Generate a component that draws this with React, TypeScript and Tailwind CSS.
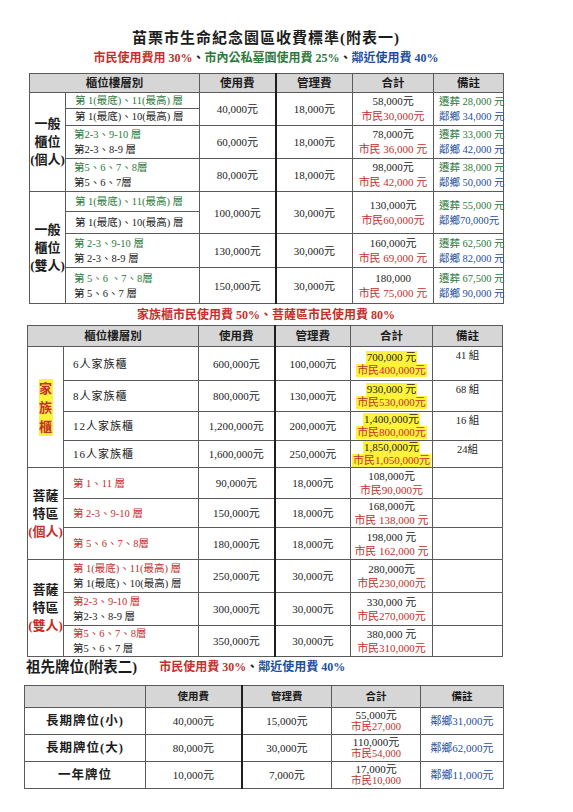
import React from "react"

const G = "text-[#2d7a3c]"
const R = "text-[#c4302b]"
const B = "text-[#1f4f9c]"
const K = "text-[#1c1c1c]"

type Line = { t: string; c: string }

const td = "border border-[#5a5a5a] p-0 align-middle"
const thick = "border-r-2 border-r-[#1e1e1e]"

function Lines({ lines, lh = "h-[15px] leading-[15px]", className = "" }: { lines: Line[]; lh?: string; className?: string }) {
  return (
    <div className={`flex flex-col ${className}`}>
      {lines.map((l, i) => (
        <span key={i} className={`block overflow-visible ${lh} ${l.c}`}>
          {l.t}
        </span>
      ))}
    </div>
  )
}

const general = [
  {
    group: ["一般", "櫃位", "(個人)"],
    rows: [
      {
        split: true,
        floors: [
          { t: "第 1(最底)、11(最高) 層", c: G },
          { t: "第 1(最底)、10(最高) 層", c: K },
        ],
        use: "40,000元",
        mgmt: "18,000元",
        total: "58,000元",
        citizen: "市民30,000元",
        notes: ["遷葬 28,000 元", "鄰鄉 34,000 元"],
        h: [16, 17],
      },
      {
        floors: [
          { t: "第2-3、9-10 層", c: G },
          { t: "第2-3、8-9 層", c: K },
        ],
        use: "60,000元",
        mgmt: "18,000元",
        total: "78,000元",
        citizen: "市民 36,000 元",
        notes: ["遷葬 33,000 元", "鄰鄉 42,000 元"],
        h: [33],
      },
      {
        floors: [
          { t: "第5、6、7、8層", c: G },
          { t: "第5、6、7層", c: K },
        ],
        use: "80,000元",
        mgmt: "18,000元",
        total: "98,000元",
        citizen: "市民 42,000 元",
        notes: ["遷葬 38,000 元", "鄰鄉 50,000 元"],
        h: [33],
      },
    ],
  },
  {
    group: ["一般", "櫃位", "(雙人)"],
    rows: [
      {
        split: true,
        floors: [
          { t: "第 1(最底)、11(最高) 層", c: G },
          { t: "第 1(最底)、10(最高) 層", c: K },
        ],
        use: "100,000元",
        mgmt: "30,000元",
        total: "130,000元",
        citizen: "市民60,000元",
        notes: ["遷葬 55,000 元", "鄰鄉70,000元"],
        h: [20, 22],
      },
      {
        floors: [
          { t: "第 2-3、9-10 層", c: G },
          { t: "第 2-3、8-9 層", c: K },
        ],
        use: "130,000元",
        mgmt: "30,000元",
        total: "160,000元",
        citizen: "市民 69,000 元",
        notes: ["遷葬 62,500 元", "鄰鄉 82,000 元"],
        h: [34],
      },
      {
        floors: [
          { t: "第 5、6 、7、8層", c: G },
          { t: "第 5、6、7 層", c: K },
        ],
        use: "150,000元",
        mgmt: "30,000元",
        total: "180,000",
        citizen: "市民 75,000 元",
        notes: ["遷葬 67,500 元", "鄰鄉 90,000 元"],
        h: [36],
      },
    ],
  },
]

const family = [
  { name: "6人家族櫃", use: "600,000元", mgmt: "100,000元", total: "700,000 元", citizen: "市民400,000元", note: "41 組", h: 34 },
  { name: "8人家族櫃", use: "800,000元", mgmt: "130,000元", total: "930,000 元", citizen: "市民530,000元", note: "68 組", h: 31 },
  { name: "12人家族櫃", use: "1,200,000元", mgmt: "200,000元", total: "1,400,000元", citizen: "市民800,000元", note: "16 組", h: 29 },
  { name: "16人家族櫃", use: "1,600,000元", mgmt: "250,000元", total: "1,850,000元", citizen: "市民1,050,000元", note: "24組", h: 27 },
]

const bodhi = [
  {
    group: "(個人)",
    rows: [
      { floors: [{ t: "第 1、11 層", c: R }], use: "90,000元", mgmt: "18,000元", total: "108,000元", citizen: "市民90,000元", h: 31 },
      { floors: [{ t: "第 2-3、9-10 層", c: R }], use: "150,000元", mgmt: "18,000元", total: "168,000元", citizen: "市民 138,000 元", h: 29 },
      { floors: [{ t: "第 5、6、7、8層", c: R }], use: "180,000元", mgmt: "18,000元", total: "198,000 元", citizen: "市民 162,000 元", h: 32 },
    ],
  },
  {
    group: "(雙人)",
    rows: [
      {
        floors: [
          { t: "第 1(最底)、11(最高) 層", c: R },
          { t: "第 1(最底)、10(最高) 層", c: K },
        ],
        use: "250,000元",
        mgmt: "30,000元",
        total: "280,000元",
        citizen: "市民230,000元",
        h: 33,
      },
      {
        floors: [
          { t: "第2-3、9-10 層", c: R },
          { t: "第2-3、8-9 層", c: K },
        ],
        use: "300,000元",
        mgmt: "30,000元",
        total: "330,000 元",
        citizen: "市民270,000元",
        h: 33,
      },
      {
        floors: [
          { t: "第5、6、7、8層", c: R },
          { t: "第5、6、7 層", c: K },
        ],
        use: "350,000元",
        mgmt: "30,000元",
        total: "380,000 元",
        citizen: "市民310,000元",
        h: 31,
      },
    ],
  },
]

const tablets = [
  { name: "長期牌位(小)", use: "40,000元", mgmt: "15,000元", total: "55,000元", citizen: "市民27,000", note: "鄰鄉31,000元" },
  { name: "長期牌位(大)", use: "80,000元", mgmt: "30,000元", total: "110,000元", citizen: "市民54,000", note: "鄰鄉62,000元" },
  { name: "一年牌位", use: "10,000元", mgmt: "7,000元", total: "17,000元", citizen: "市民10,000", note: "鄰鄉11,000元" },
]

function HeadRow({ h }: { h: number }) {
  const th = `${td} bg-[#d6d6d6] text-center font-bold text-[11.5px] leading-[14px] ${K}`
  return (
    <tr style={{ height: h }}>
      <th colSpan={2} className={th}>櫃位樓層別</th>
      <th className={`${th} ${thick}`}>使用費</th>
      <th className={th}>管理費</th>
      <th className={th}>合計</th>
      <th className={th}>備註</th>
    </tr>
  )
}

function Cols({ w }: { w: number[] }) {
  return (
    <colgroup>
      {w.map((x, i) => (
        <col key={i} style={{ width: x }} />
      ))}
    </colgroup>
  )
}

export default function App() {
  const num = `${td} text-center text-[11px] leading-[14px] ${K}`
  return (
    <div className="w-[573px] h-[812px] bg-white overflow-hidden font-['Liberation_Serif','Noto_Sans_CJK_TC',serif]">
      <div className="ml-[24px] w-[480px] pt-[28px]">
        <h1 className={`ml-[5px] w-[474px] h-[20px] text-center text-[15px] leading-[20px] font-bold tracking-[1px] ${K}`}>
          苗栗市生命紀念園區收費標準(附表一)
        </h1>
        <p className="ml-[5px] mt-[2px] w-[474px] h-[16px] text-center text-[12px] leading-[16px] font-bold">
          <span className={R}>市民使用費用 30%</span>
          <span className={K}>、</span>
          <span className={G}>市內公私墓園使用費 25%</span>
          <span className={K}>、</span>
          <span className={B}>鄰近使用費 40%</span>
        </p>

        <table className="ml-[5px] mt-[7px] w-[474px] table-fixed border-collapse">
          <Cols w={[36, 134, 76, 77, 81, 70]} />
          <tbody>
            <HeadRow h={19} />
            {general.map((g) =>
              g.rows.map((r, ri) => {
                const span = g.rows.reduce((a, x) => a + x.h.length, 0)
                const rs = r.h.length
                const first = (
                  <tr key={`${g.group[2]}-${ri}`} style={{ height: r.h[0] }}>
                    {ri === 0 && (
                      <td rowSpan={span} className={`${td} text-center text-[13px] font-bold ${K}`}>
                        {g.group.map((s) => (
                          <div key={s} className={`h-[18px] leading-[18px] ${s.startsWith("(") ? "-mx-[3px]" : ""}`}>
                            {s}
                          </div>
                        ))}
                      </td>
                    )}
                    {r.split ? (
                      <td className={`${td} pl-[9px] text-[10.5px] leading-[14px] whitespace-nowrap ${r.floors[0].c}`}>{r.floors[0].t}</td>
                    ) : (
                      <td className={`${td} pl-[8px] text-[10.5px] whitespace-nowrap`}>
                        <Lines lines={r.floors} />
                      </td>
                    )}
                    <td rowSpan={rs} className={`${num} ${thick}`}>{r.use}</td>
                    <td rowSpan={rs} className={num}>{r.mgmt}</td>
                    <td rowSpan={rs} className={`${td} text-center text-[11px]`}>
                      <Lines lines={[{ t: r.total, c: K }, { t: r.citizen, c: R }]} />
                    </td>
                    <td rowSpan={rs} className={`${td} pl-[5px] text-[10.5px] whitespace-nowrap`}>
                      <Lines lines={[{ t: r.notes[0], c: G }, { t: r.notes[1], c: B }]} />
                    </td>
                  </tr>
                )
                if (!r.split) return first
                return [
                  first,
                  <tr key={`${g.group[2]}-${ri}-b`} style={{ height: r.h[1] }}>
                    <td className={`${td} pl-[9px] text-[10.5px] leading-[14px] whitespace-nowrap ${r.floors[1].c}`}>{r.floors[1].t}</td>
                  </tr>,
                ]
              })
            )}
          </tbody>
        </table>

        <p className="ml-[5px] mt-[3px] w-[474px] h-[16px] text-center text-[12px] leading-[16px] font-bold text-[#c4302b]">
          家族櫃市民使用費 50%、菩薩區市民使用費 80%
        </p>

        <table className="ml-[3px] mt-[2px] w-[475px] table-fixed border-collapse">
          <Cols w={[36, 135, 76, 76, 82, 70]} />
          <tbody>
            <HeadRow h={21} />
            {family.map((f, i) => (
              <tr key={f.name} style={{ height: f.h }}>
                {i === 0 && (
                  <td rowSpan={4} className={`${td} text-center text-[13px] font-bold text-[#c4302b]`}>
                    <div className="mx-auto h-[19px] w-[14px] leading-[19px] bg-[#fff23a]">家</div>
                    <div className="mx-auto h-[19px] w-[14px] leading-[19px] bg-[#fff23a]">族</div>
                    <div className="mx-auto h-[19px] w-[14px] leading-[19px] bg-[#fff23a]">櫃</div>
                  </td>
                )}
                <td className={`${td} pl-[9px] text-[11px] leading-[14px] tracking-[1px] ${K}`}>{f.name}</td>
                <td className={`${num} ${thick}`}>{f.use}</td>
                <td className={num}>{f.mgmt}</td>
                <td className={`${td} text-center text-[11px]`}>
                  <div className="flex flex-col items-center">
                    <span className={`block h-[13px] leading-[13px] bg-[#fff23a] px-[1px] ${K}`}>{f.total}</span>
                    <span className="block h-[13px] leading-[13px] bg-[#fff23a] px-[1px] text-[#c4302b]">{f.citizen}</span>
                  </div>
                </td>
                <td className={`${td} align-top pt-[2px] text-center text-[10.5px] leading-[14px] ${K}`}>{f.note}</td>
              </tr>
            ))}
            {bodhi.map((g) =>
              g.rows.map((r, ri) => (
                <tr key={`${g.group}-${ri}`} style={{ height: r.h }}>
                  {ri === 0 && (
                    <td rowSpan={3} className={`${td} text-center text-[13px] font-bold`}>
                      <div className={`h-[18px] leading-[18px] ${K}`}>菩薩</div>
                      <div className={`h-[18px] leading-[18px] ${K}`}>特區</div>
                      <div className={`-mx-[3px] h-[18px] leading-[18px] ${R}`}>{g.group}</div>
                    </td>
                  )}
                  <td className={`${td} pl-[9px] text-[10.5px] whitespace-nowrap`}>
                    <Lines lines={r.floors} />
                  </td>
                  <td className={`${num} ${thick}`}>{r.use}</td>
                  <td className={num}>{r.mgmt}</td>
                  <td className={`${td} text-center text-[11px]`}>
                    <Lines lines={[{ t: r.total, c: K }, { t: r.citizen, c: R }]} lh="h-[14px] leading-[14px]" />
                  </td>
                  <td className={td}></td>
                </tr>
              ))
            )}
          </tbody>
        </table>

        <div className="mt-[1px] flex h-[18px] items-center">
          <span className={`ml-[2px] text-[14.5px] leading-[18px] font-bold ${K}`}>祖先牌位(附表二)</span>
          <span className="ml-[22px] text-[12px] leading-[16px] font-bold">
            <span className={R}>市民使用費 30%</span>
            <span className={K}>、</span>
            <span className={B}>鄰近使用費 40%</span>
          </span>
        </div>

        <table className="mt-[9px] w-[479px] table-fixed border-collapse">
          <Cols w={[121, 96, 90, 89, 83]} />
          <tbody>
            <tr className="h-[22px]">
              {["", "使用費", "管理費", "合計", "備註"].map((h, i) => (
                <th
                  key={i}
                  className={`${td} bg-[#d6d6d6] text-center text-[10.5px] leading-[14px] font-bold ${K} ${i === 1 ? thick : ""}`}
                >
                  {h}
                </th>
              ))}
            </tr>
            {tablets.map((t) => (
              <tr key={t.name} className="h-[27px]">
                <td className={`${td} text-center text-[12.5px] leading-[16px] font-bold tracking-[1px] ${K}`}>{t.name}</td>
                <td className={`${num} ${thick}`}>{t.use}</td>
                <td className={num}>{t.mgmt}</td>
                <td className={`${td} text-center text-[11px]`}>
                  <div className="flex flex-col">
                    <span className={`block h-[12px] leading-[12px] ${K}`}>{t.total}</span>
                    <span className={`block h-[12px] leading-[12px] text-[10.5px] ${R}`}>{t.citizen}</span>
                  </div>
                </td>
                <td className={`${td} text-center text-[11px] leading-[14px] ${B}`}>{t.note}</td>
              </tr>
            ))}
          </tbody>
        </table>
      </div>
    </div>
  )
}
